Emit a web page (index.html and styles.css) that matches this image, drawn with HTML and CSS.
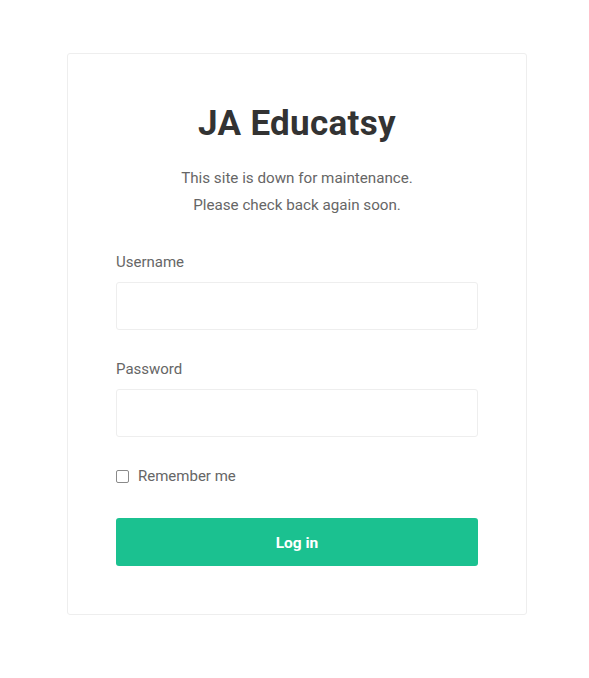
FILE: index.html
```html
<!DOCTYPE html>
<html lang="en">
<head>
<meta charset="utf-8">
<title>JA Educatsy</title>
<link rel="stylesheet" href="styles.css">
</head>
<body>
<div class="page">
  <div class="card">
    <h1 class="title">JA Educatsy</h1>
    <p class="message">This site is down for maintenance.<br>Please check back again soon.</p>
    <form class="form">
      <div class="field">
        <label class="label" for="username">Username</label>
        <input class="input" id="username" type="text">
      </div>
      <div class="field">
        <label class="label" for="password">Password</label>
        <input class="input" id="password" type="password">
      </div>
      <label class="remember"><span class="checkbox"></span>Remember me</label>
      <button class="button" type="button">Log in</button>
    </form>
  </div>
</div>
</body>
</html>
```
FILE: styles.css
```css
* { box-sizing: border-box; }
html, body { margin: 0; padding: 0; background: #fff; }
body {
  font-family: Roboto, "Liberation Sans", sans-serif;
  color: #666;
  font-size: 15px;
  line-height: 27px;
}
.page {
  padding: 53px 0 0 67px;
}
.card {
  width: 460px;
  border: 1px solid #eeeeee;
  border-radius: 3px;
  padding: 48px 48px 48px;
}
.title {
  margin: 0;
  text-align: center;
  font-size: 35px;
  line-height: 44px;
  font-weight: 700;
  color: #333;
  letter-spacing: 0.3px;
}
.message {
  margin: 19px 0 0;
  text-align: center;
  color: #666;
  font-size: 15.2px;
}
.form {
  margin-top: 30px;
  display: flex;
  flex-direction: column;
}
.field {
  display: flex;
  flex-direction: column;
  margin-bottom: 26px;
}
.label {
  display: block;
  color: #666;
}
.input {
  margin-top: 6px;
  height: 48px;
  width: 100%;
  border: 1px solid #eeeeee;
  border-radius: 3px;
  background: #fff;
  padding: 0 12px;
  font: inherit;
  outline: none;
}
.remember {
  display: flex;
  align-items: center;
  gap: 9px;
  color: #666;
}
.checkbox {
  width: 13px;
  height: 13px;
  border: 1px solid #8a8a8a;
  border-radius: 2px;
  background: #fff;
}
.button {
  margin-top: 28px;
  height: 48px;
  width: 100%;
  border: none;
  border-radius: 3px;
  background: #1bc190;
  color: #fff;
  font-family: inherit;
  font-size: 15.5px;
  font-weight: 700;
  padding: 2px 0 0;
  cursor: pointer;
}
```
